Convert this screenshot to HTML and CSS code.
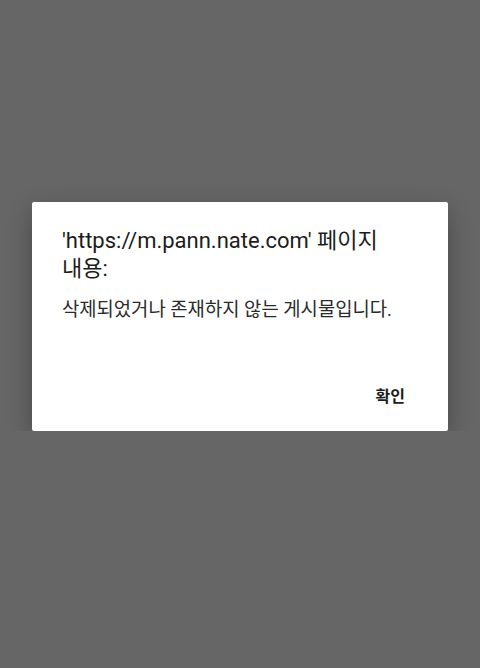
FILE: index.html
```html
<!DOCTYPE html>
<html lang="ko">
<head>
    <meta charset="UTF-8">
    <meta name="viewport" content="width=device-width, initial-scale=1.0">
    <title>알림</title>
    <link rel="stylesheet" href="styles.css">
</head>
<body>

    <!-- 알림 대화상자 -->
    <div class="dialog">
        <h2 class="dialog-title">'https://m.pann.nate.com' 페이지 내용:</h2>
        <p class="dialog-message">삭제되었거나 존재하지 않는 게시물입니다.</p>
        <div class="dialog-actions">
            <button class="btn">확인</button>
        </div>
    </div>

</body>
</html>
```

FILE: styles.css
```css
body {
    font-family: Roboto, 'Noto Sans CJK KR', sans-serif;
    margin: 0;
    padding-top: 202px;
    background-color: #666666;
}
.dialog {
    width: 416px;
    box-sizing: border-box;
    margin: 0 auto;
    background-color: #fff;
    border-radius: 2px;
    padding: 25px 24px 0 30px;
    box-shadow: 0 8px 24px rgba(0, 0, 0, 0.3);
}
.dialog-title {
    margin: 0;
    font-size: 22px;
    font-weight: normal;
    line-height: 28px;
    color: #1c1c1c;
    padding-right: 20px;
    word-break: keep-all;
}
.dialog-message {
    margin: 15px 0 0;
    font-size: 18.8px;
    line-height: 24px;
    color: #2a2a2a;
}
.dialog-actions {
    display: flex;
    justify-content: flex-end;
    padding: 59px 11px 18px 0;
}
.btn {
    font-family: Roboto, 'Noto Sans CJK KR', sans-serif;
    font-size: 16px;
    font-weight: bold;
    line-height: 20px;
    color: #1c1c1c;
    background: none;
    border: none;
    padding: 6px 8px;
    cursor: pointer;
}
```
